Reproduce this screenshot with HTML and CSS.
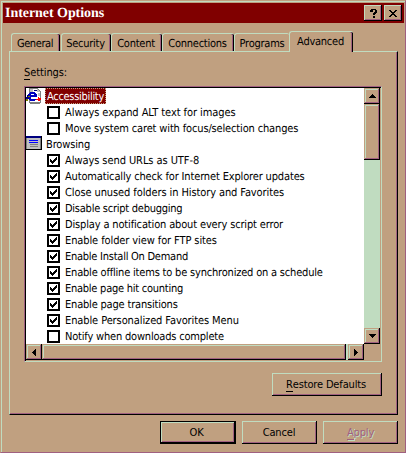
FILE: index.html
```html
<!DOCTYPE html>
<html lang="en">
<head>
<meta charset="utf-8">
<title>Internet Options</title>
<link rel="stylesheet" href="styles.css">
</head>
<body>
<div class="window">
  <header class="titlebar">
    <h1 class="title">Internet Options</h1>
    <button class="sys" aria-label="Help"><svg width="7" height="9" shape-rendering="crispEdges"><path d="M1 0h5v1h1v3h-1v1h-1v1h-2v-2h1v-1h1v-2h-2v2h-3v-2h1zM3 7h2v2h-2z"/></svg></button>
    <button class="sys close" aria-label="Close"><svg width="8" height="7" shape-rendering="crispEdges"><path d="M0 0h2v1h1v1h2v-1h1v-1h2v1h-1v1h-1v1h-1v1h1v1h1v1h1v1h-2v-1h-1v-1h-2v1h-1v1h-2v-1h1v-1h1v-1h1v-1h-1v-1h-1v-1h-1z"/></svg></button>
  </header>
  <nav class="tabs">
    <div class="tab t-general"><span>General</span></div>
    <div class="tab t-security"><span>Security</span></div>
    <div class="tab t-content"><span>Content</span></div>
    <div class="tab t-connections"><span>Connections</span></div>
    <div class="tab t-programs"><span>Programs</span></div>
    <div class="tab active"><span>Advanced</span></div>
  </nav>
  <main class="panel">
    <div class="label"><u>S</u>ettings:</div>
    <div class="tree">
      <ul class="rows">
        <li class="head"><svg class="icon" width="16" height="16" shape-rendering="crispEdges"><path fill="#808080" d="M3 0h9v1h1v1h1v1h1v12h-1v1h-10v-1h-1z"/><path fill="#fff" d="M4 1h7v3h3v10h-10z"/><path fill="#c0c0c0" d="M4 1h3v3h-3zM11 1h1v1h1v1h1v1h-3zM12 5h2v3h-2z"/><path fill="#0000c0" d="M4 4h5v1h1v1h1v3h-6v2h5v1h-1v1h-5v-1h-1v-1h-1v-5h1v-1h1zM5 6v1h3v-1z"/><path fill="#000080" d="M1 7h2v4h-1v2h-2v-4h1zM8 2h3v1h-3z"/><path fill="#808000" d="M0 11h2v2h-2zM2 8h2v1h-2z"/><path fill="red" d="M12 9h1v1h2v2h-1v1h-2v-1h-2v-1h2z"/></svg><span class="selected">Accessibility</span></li>
        <li><i class="box"></i><span class="ls1">Always expand ALT text for images</span></li>
        <li><i class="box"></i><span class="ls3">Move system caret with focus/selection changes</span></li>
        <li class="head"><svg class="icon" width="16" height="16" shape-rendering="crispEdges"><path fill="#808080" d="M0 0h16v14h-16z"/><path fill="#c0c0c0" d="M1 1h13v12h-13z"/><path fill="#000080" d="M0 0h15v2h-15z"/><path fill="#000" d="M15 0h1v14h-16v-1h15z"/><path fill="#00f" d="M3 4h9v1h-9zM3 6h9v1h-9z"/><path fill="#808080" d="M4 8h8v1h-8zM4 10h8v1h-8z"/></svg><span class="ls3">Browsing</span></li>
        <li><i class="box on"></i><span class="ls1">Always send URLs as UTF-8</span></li>
        <li><i class="box on"></i><span class="ls3">Automatically check for Internet Explorer updates</span></li>
        <li><i class="box on"></i><span class="ls2">Close unused folders in History and Favorites</span></li>
        <li><i class="box on"></i><span class="ls5">Disable script debugging</span></li>
        <li><i class="box on"></i><span class="ls3">Display a notification about every script error</span></li>
        <li><i class="box on"></i><span class="ls2">Enable folder view for FTP sites</span></li>
        <li><i class="box on"></i><span class="ls5">Enable Install On Demand</span></li>
        <li><i class="box on"></i><span class="ls4">Enable offline items to be synchronized on a schedule</span></li>
        <li><i class="box on"></i><span class="ls5">Enable page hit counting</span></li>
        <li><i class="box on"></i><span class="ls4">Enable page transitions</span></li>
        <li><i class="box on"></i><span class="ls2">Enable Personalized Favorites Menu</span></li>
        <li><i class="box"></i><span class="ls4">Notify when downloads complete</span></li>
      </ul>
      <div class="vscroll">
        <div class="bev arrow"><svg width="7" height="4" shape-rendering="crispEdges"><path d="M3 0h1v1h1v1h1v1h1v1h-7v-1h1v-1h1v-1h1z"/></svg></div>
        <div class="bev vthumb"></div>
        <div class="track"></div>
        <div class="bev arrow"><svg width="7" height="4" shape-rendering="crispEdges"><path d="M0 0h7v1h-1v1h-1v1h-1v1h-1v-1h-1v-1h-1v-1h-1z"/></svg></div>
      </div>
      <div class="hscroll">
        <div class="bev arrow"><svg width="4" height="7" shape-rendering="crispEdges"><path d="M4 0v7h-1v-1h-1v-1h-1v-1h-1v-1h1v-1h1v-1h1v-1z"/></svg></div>
        <div class="bev hthumb"></div>
        <div class="track"></div>
        <div class="bev arrow"><svg width="4" height="7" shape-rendering="crispEdges"><path d="M0 0h1v1h1v1h1v1h1v1h-1v1h-1v1h-1v1h-1z"/></svg></div>
      </div>
    </div>
    <button class="btn restore"><span><u>R</u>estore Defaults</span></button>
  </main>
  <footer class="actions">
    <button class="btn ok"><span>OK</span></button>
    <button class="btn cancel"><span>Cancel</span></button>
    <button class="btn apply"><span><u>A</u>pply</span></button>
  </footer>
</div>
</body>
</html>
```
FILE: styles.css
```css
:root {
  --face: #c0a080;
  --light: #c0dcc0;
  --shade: #a06080;
  --accent: #800000;
}
* { box-sizing: border-box; }
body { margin: 0; background: var(--face); overflow: hidden; }
.window {
  width: 406px;
  height: 453px;
  padding: 2px 1px 0 2px;
  background: var(--face);
  border: 1px solid var(--shade);
  border-top-color: var(--face);
  border-left-color: var(--face);
  box-shadow: inset 1px 1px var(--light);
  font: 11px/16px "DejaVu Sans Condensed", "Noto Sans", sans-serif;
  text-rendering: geometricPrecision;
  color: #000;
}
button { margin: 0; padding: 0; font: inherit; color: inherit; border: 0; border-radius: 0; }
u { text-decoration: none; box-shadow: 0 1px #000; display: inline-block; line-height: 12px; }
.titlebar {
  display: flex;
  align-items: center;
  height: 20px;
  width: 401px;
  background: var(--accent);
  padding: 0 2px;
}
.title {
  flex: 1;
  margin: 0;
  padding-top: 2px;
  color: #fff;
  font: bold 14px/20px "Liberation Serif", serif;
  letter-spacing: -0.05px;
  white-space: nowrap;
}
.sys, .bev {
  display: flex;
  align-items: center;
  justify-content: center;
  background: var(--face);
}
.sys {
  width: 18px;
  height: 16px;
  box-shadow: inset -1px -1px #000, inset 1px 1px var(--light), inset -2px -2px var(--shade);
}
.close { margin-left: 2px; }
.tabs {
  display: flex;
  align-items: flex-end;
  height: 28px;
  padding-left: 8px;
}
.tab {
  height: 18px;
  padding-right: 2px;
  border: solid var(--light);
  border-width: 1px 0 0 1px;
  border-radius: 3px 2px 0 0;
  box-shadow: inset -1px 0 #000, inset -2px 0 var(--shade);
  text-align: center;
  line-height: 19px;
  letter-spacing: -0.25px;
  white-space: nowrap;
}
.t-general { width: 49px; letter-spacing: -0.4px; }
.t-security { width: 50px; margin-left: 1px; }
.t-content { width: 51px; }
.t-connections { width: 72px; }
.t-programs { width: 55px; padding-right: 0; box-shadow: none; }
.active {
  position: relative;
  width: 64px;
  height: 21px;
  margin-bottom: -1px;
  line-height: 20px;
  background: var(--face);
}
.panel {
  width: 389px;
  height: 364px;
  margin-left: 6px;
  padding: 12px 0 0 14px;
  border: 1px solid #000;
  border-top-color: var(--light);
  border-left-color: var(--light);
  box-shadow: inset -1px -1px var(--shade);
}
.label { height: 22px; line-height: 18px; letter-spacing: -0.1px; }
.tree {
  display: grid;
  grid-template: 256px 16px / 338px 16px;
  width: 358px;
  height: 276px;
  padding: 1px;
  border: 1px solid var(--shade);
  border-right-color: var(--light);
  border-bottom-color: var(--light);
  box-shadow: inset 1px 1px #000;
}
.rows { margin: 0; padding: 0; list-style: none; background: #fff; overflow: hidden; }
.rows li { display: flex; height: 16px; padding-left: 21px; line-height: 18px; white-space: nowrap; }
.rows li.head { padding-left: 0; }
.icon { flex: none; width: 16px; margin-right: 4px; }
.selected {
  width: 61px;
  margin-left: -1px;
  padding-left: 2px;
  background: var(--accent);
  color: #fff;
  letter-spacing: -0.3px;
  outline: 1px dotted #c0a080;
  outline-offset: -1px;
}
.ls1 { letter-spacing: -0.07px; }
.ls2 { letter-spacing: -0.1px; }
.ls3 { letter-spacing: -0.15px; }
.ls4 { letter-spacing: -0.19px; }
.ls5 { letter-spacing: -0.25px; }
.box {
  flex: none;
  width: 13px;
  height: 13px;
  margin: 2px 5px 0 0;
  padding: 1px;
  border: 2px solid #000;
}
.on::after {
  content: "";
  display: block;
  width: 7px;
  height: 7px;
  background: #000;
  clip-path: polygon(0 2px, 1px 2px, 1px 3px, 2px 3px, 2px 4px, 3px 4px, 3px 3px, 4px 3px, 4px 2px, 5px 2px, 5px 1px, 6px 1px, 6px 0, 7px 0, 7px 3px, 6px 3px, 6px 4px, 5px 4px, 5px 5px, 4px 5px, 4px 6px, 3px 6px, 3px 7px, 2px 7px, 2px 6px, 1px 6px, 1px 5px, 0 5px);
}
.vscroll { display: flex; flex-direction: column; }
.hscroll { display: flex; width: 338px; }
.arrow { flex: none; width: 16px; height: 16px; }
.bev { box-shadow: inset -1px -1px #000, inset 1px 1px var(--face), inset -2px -2px var(--shade), inset 2px 2px var(--light); }
.vthumb { height: 56px; }
.hthumb { width: 304px; }
.track { flex: 1; background: var(--light); }
.btn {
  display: flex;
  align-items: center;
  justify-content: center;
  width: 75px;
  height: 23px;
  background: var(--face);
  box-shadow: inset -1px -1px #000, inset 1px 1px var(--light), inset -2px -2px var(--shade);
  letter-spacing: -0.15px;
}
.restore { width: 110px; margin: 11px 0 0 248px; padding-right: 2px; }
.actions { display: flex; gap: 6px; margin: 6px 0 0 157px; }
.ok {
  width: 76px;
  padding-right: 3px;
  border: 1px solid #000;
}
.cancel { padding-right: 1px; }
.apply { color: var(--shade); text-shadow: 1px 1px var(--light); }
.apply u { box-shadow: 0 1px var(--shade), 1px 2px var(--light); }
```
